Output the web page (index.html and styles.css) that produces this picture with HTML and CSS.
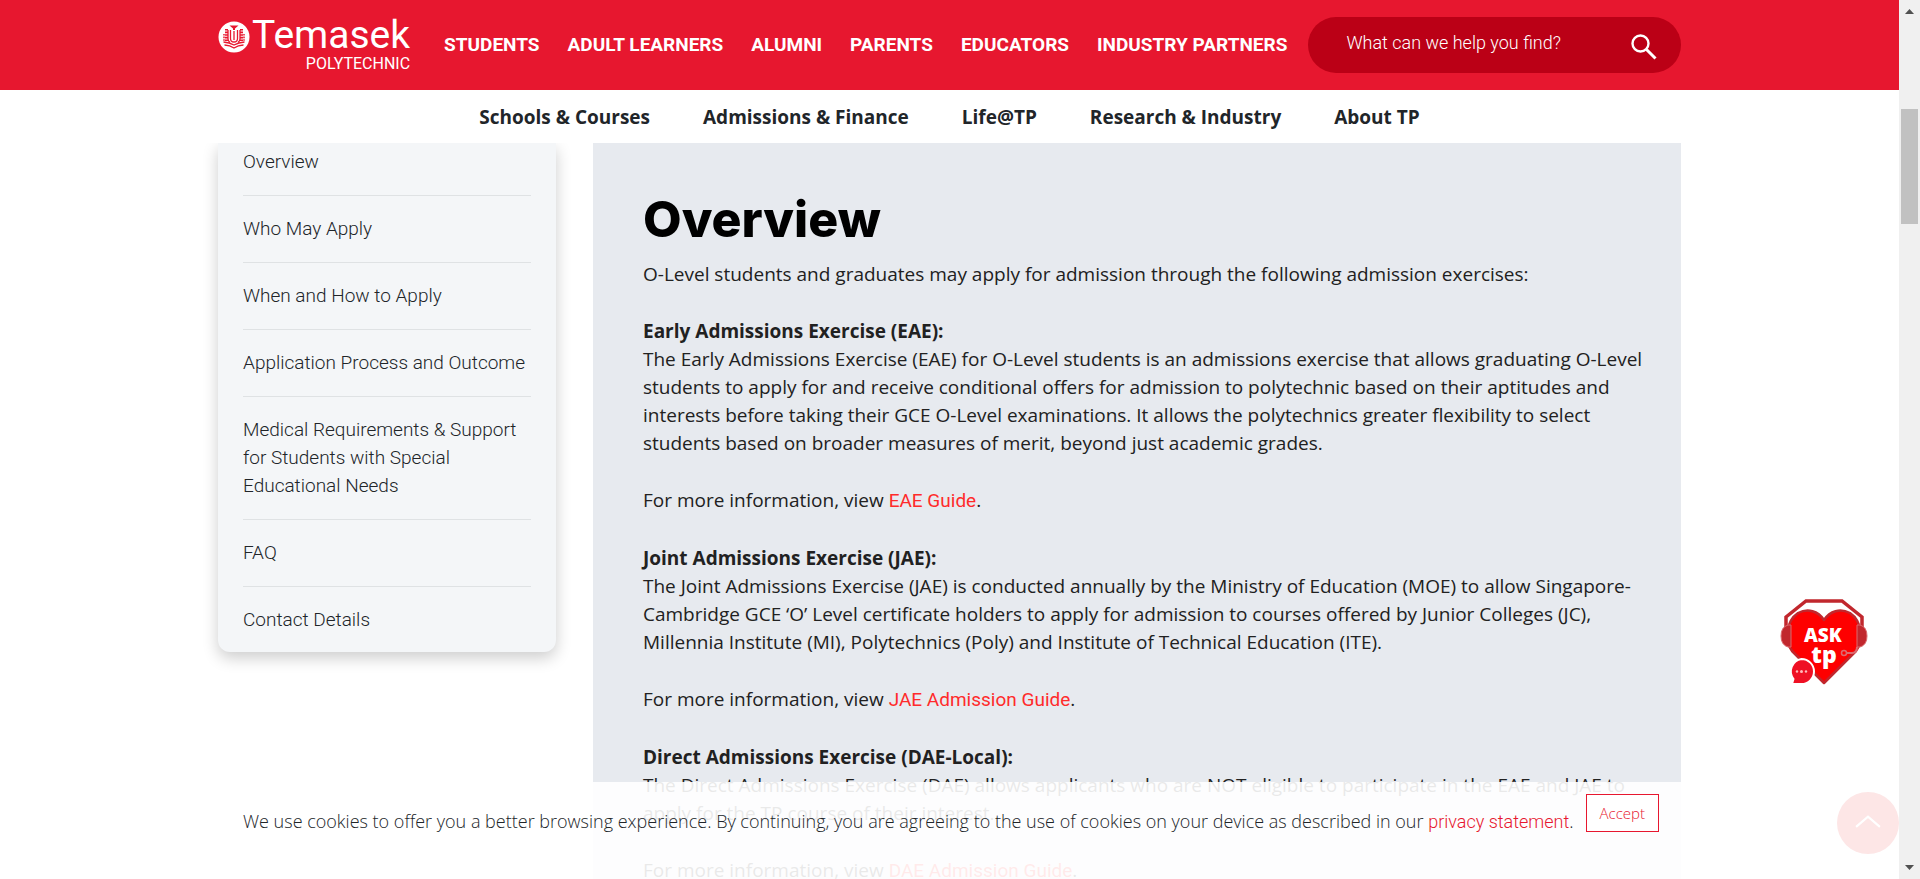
FILE: index.html
```html
<!DOCTYPE html>
<html lang="en">
<head>
<meta charset="utf-8">
<meta name="viewport" content="width=device-width, initial-scale=1">
<title>Temasek Polytechnic - Admissions</title>
<link rel="stylesheet" href="styles.css">
</head>
<body>
<div class="page">
  <header class="header">
    <div class="topbar">
      <div class="container topbar-row">
        <a class="logo" href="#" aria-label="Temasek Polytechnic">
          <svg class="logo-emblem" viewBox="0 0 32 32" aria-hidden="true">
            <circle cx="16" cy="16" r="15.5" fill="#fff"/>
            <path d="M11.5 4.5h9L17 7.5V9h-2V7.500z" fill="#e7172f"/>
            <g fill="none" stroke="#e7172f" stroke-width="1.300">
              <path d="M12.500 9v8.500q0 3.500 3.500 3.500t3.500-3.500V9"/>
              <path d="M10 9v9q0 2 2 3.500M22 9v9q0 2-2 3.500"/>
              <path d="M16 10v9"/>
              <path d="M5.500 21q6 .5 10.500 3 4.500-2.500 10.500-3M6.500 24q5.500.3 9.500 3 4-2.700 9.500-3"/>
            </g>
            <path d="M8.500 8v12M23.500 8v12" stroke="#e7172f" stroke-width="3" stroke-dasharray="1.600 1" fill="none"/>
            <path d="M6 13v7M26 13v7" stroke="#e7172f" stroke-width="1.500" stroke-dasharray="1.600 1" fill="none"/>
          </svg>
          <span class="logo-words"><span class="logo-name">Temasek</span><span class="logo-sub">POLYTECHNIC</span></span>
        </a>
        <nav class="audience" aria-label="Audience">
          <a href="#">STUDENTS</a><a href="#">ADULT LEARNERS</a><a href="#">ALUMNI</a><a href="#">PARENTS</a><a href="#">EDUCATORS</a><a href="#">INDUSTRY PARTNERS</a>
        </nav>
        <form class="search">
          <input class="search-input" type="text" placeholder="What can we help you find?" aria-label="Search">
          <button class="search-button" type="button" aria-label="Search">
            <svg viewBox="0 0 26 26" width="26" height="26" fill="none" stroke="#fff"><circle cx="9.500" cy="9.500" r="8" stroke-width="2.400"/><path d="M15.500 15.500l9 9" stroke-width="3"/></svg>
          </button>
        </form>
      </div>
    </div>
    <nav class="sections" aria-label="Main">
      <a href="#">Schools &amp; Courses</a><a href="#">Admissions &amp; Finance</a><a href="#">Life@TP</a><a href="#">Research &amp; Industry</a><a href="#">About TP</a>
    </nav>
  </header>

  <div class="scroll">
    <div class="container columns">
      <nav class="sidebar" aria-label="On this page">
        <a href="#">Overview</a>
        <a href="#">Who May Apply</a>
        <a href="#">When and How to Apply</a>
        <a href="#">Application Process and Outcome</a>
        <a href="#">Medical Requirements &amp; Support for Students with Special Educational Needs</a>
        <a href="#">FAQ</a>
        <a href="#">Contact Details</a>
      </nav>
      <main class="content">
        <h1>Overview</h1>
        <p>O-Level students and graduates may apply for admission through the following admission exercises:</p>
        <p><strong>Early Admissions Exercise (EAE):</strong><br>The Early Admissions Exercise (EAE) for O-Level students is an admissions exercise that allows graduating O-Level students to apply for and receive conditional offers for admission to polytechnic based on their aptitudes and interests before taking their GCE O-Level examinations. It allows the polytechnics greater flexibility to select students based on broader measures of merit, beyond just academic grades.</p>
        <p>For more information, view <a href="#">EAE Guide</a>.</p>
        <p><strong>Joint Admissions Exercise (JAE):</strong><br>The Joint Admissions Exercise (JAE) is conducted annually by the Ministry of Education (MOE) to allow Singapore-Cambridge GCE ‘O’ Level certificate holders to apply for admission to courses offered by Junior Colleges (JC), Millennia Institute (MI), Polytechnics (Poly) and Institute of Technical Education (ITE).</p>
        <p>For more information, view <a href="#">JAE Admission Guide</a>.</p>
        <p><strong>Direct Admissions Exercise (DAE-Local):</strong><br>The Direct Admissions Exercise (DAE) allows applicants who are NOT eligible to participate in the EAE and JAE to apply for the TP course of their interest.</p>
        <p>For more information, view <a href="#">DAE Admission Guide</a>.</p>
      </main>
    </div>
  </div>

  <button class="ask" type="button" aria-label="Ask TP">
    <svg viewBox="0 0 88 86" width="88" height="86">
      <path d="M44 84L12 52C4 42 6 22 18 14c10-5 20-2 26 7 6-9 16-12 26-7 12 8 14 28 6 38z" fill="#fe0000" stroke="#c1272d" stroke-width="2.500" stroke-linejoin="round"/>
      <path d="M6 30V18L26 2h36l20 16v12" fill="none" stroke="#c1272d" stroke-width="3.500"/>
      <path d="M11 26H8q-7 2-7 11t7 11h3zM77 26h3q7 2 7 11t-7 11h-3z" fill="#c1272d" stroke="#dc6a6e" stroke-width="1"/>
      <path d="M77 48q0 6-5 6h-6" fill="none" stroke="#dc6a6e" stroke-width="2"/>
      <circle cx="64" cy="54" r="2.500" fill="#fe0000" stroke="#dc6a6e" stroke-width="1.500"/>
      <path d="M21.500 60a12.500 12.500 0 1 1 0 25H12l1.500-5A12.500 12.500 0 0 1 21.500 60z" fill="#ef1024" stroke="#fff" stroke-width="2"/>
      <g fill="#fbb"><circle cx="17" cy="72.500" r="1.200"/><circle cx="21.500" cy="72.500" r="1.500"/><circle cx="26" cy="72.500" r="1.200"/></g>
      <text class="ask-text" x="43" y="43" font-size="19">ASK</text>
      <text class="ask-text" x="44" y="64" font-size="23">tp</text>
    </svg>
  </button>

  <button class="to-top" type="button" aria-label="Back to top">
    <svg viewBox="0 0 24 12" width="26" height="13" fill="none" stroke="#fff" stroke-width="2"><path d="M1 11L12 1.500 23 11"/></svg>
  </button>

  <div class="cookies" role="region" aria-label="Cookie notice">
    <div class="container cookies-row">
      <p>We use cookies to offer you a better browsing experience. By continuing, you are agreeing to the use of cookies on your device as described in our <a href="#">privacy statement</a>.</p>
      <button class="accept" type="button">Accept</button>
    </div>
  </div>
</div>

<div class="track" aria-hidden="true">
  <svg viewBox="0 0 9 5" width="9" height="5"><path d="M0 5L4.500 0 9 5z" fill="#505050"/></svg>
  <div class="thumb"></div>
  <svg class="track-end" viewBox="0 0 9 5" width="9" height="5"><path d="M0 0L4.500 5 9 0z" fill="#505050"/></svg>
</div>
</body>
</html>
```
FILE: styles.css
```css
* { box-sizing: border-box; }

body {
  margin: 0;
  display: flex;
  height: 100vh;
  overflow: hidden;
  background: #fff;
  color: #212529;
  font-family: "Open Sans", "Noto Sans", sans-serif;
  font-size: 19px;
  line-height: 28px;
}

a { text-decoration: none; color: inherit; }
button { font: inherit; cursor: pointer; }

.page {
  position: relative;
  flex: 1;
  min-width: 0;
  display: flex;
  flex-direction: column;
}

.container {
  width: 100%;
  max-width: 1463px;
  margin: 0 auto;
}

.header { position: relative; z-index: 2; background: #fff; }
.topbar { background: #e7172f; }
.topbar-row { display: flex; align-items: center; height: 90px; }

.logo { display: flex; gap: 2px; color: #fff; font-family: Roboto, sans-serif; font-weight: 400; }
.logo-emblem { width: 32px; height: 32px; margin-top: 5px; }
.logo-words { display: flex; flex-direction: column; align-items: flex-end; }
.logo-name { font-size: 39px; line-height: 38px; }
.logo-sub { font-size: 16px; line-height: 20px; }

.audience {
  display: flex;
  gap: 28px;
  margin-left: 34px;
  color: #fff;
  font-family: Roboto, sans-serif;
  font-weight: 700;
  white-space: nowrap;
}

.search {
  display: flex;
  align-items: center;
  flex: 1;
  height: 56px;
  margin-left: 21px;
  padding: 0 24px 0 38px;
  border-radius: 28px;
  background: #bb0016;
}
.search-input {
  flex: 1;
  min-width: 0;
  padding: 0 0 6px;
  border: 0;
  outline: 0;
  background: none;
  color: #fff;
  font-family: Roboto, sans-serif;
  font-size: 18px;
  font-weight: 300;
}
.search-input::placeholder { color: #fff; opacity: 1; }
.search-button { display: flex; padding: 4px 0 0; border: 0; background: none; }

.sections {
  display: flex;
  justify-content: center;
  align-items: center;
  gap: 53px;
  height: 53px;
  font-weight: 700;
}

.scroll { flex: 1; min-height: 0; overflow-y: auto; scrollbar-width: none; }
.columns { display: flex; align-items: flex-start; gap: 37px; }

.sidebar {
  flex: none;
  width: 338px;
  padding: 0 25px;
  border-radius: 0 0 12px 12px;
  background: #f4f6f8;
  box-shadow: 0 6px 16px rgba(0, 0, 0, 0.2);
  font-family: Roboto, sans-serif;
  font-weight: 300;
}
.sidebar a { display: block; padding: 19px 0; border-bottom: 1px solid #dfe2e4; }
.sidebar a:first-child { padding-top: 5px; }
.sidebar a:last-child { padding-bottom: 18px; border-bottom: 0; }

.content {
  flex: 1;
  min-width: 0;
  padding: 46px 36px 48px 50px;
  background: #e7eaef;
  color: #212121;
}
.content h1 {
  margin: 0 0 11px;
  color: #000;
  font-family: Inter, sans-serif;
  font-size: 50px;
  font-weight: 800;
  line-height: 60px;
}
.content p { margin: 0 0 29px; }
.content strong { font-weight: 700; }
.content a { color: #ff2b2b; font-family: Roboto, sans-serif; }

.cookies {
  position: absolute;
  z-index: 3;
  left: 0;
  right: 0;
  bottom: 0;
  height: 97px;
  padding-top: 12px;
  background: rgba(255, 255, 255, 0.9);
}
.cookies-row { display: flex; align-items: flex-start; gap: 12px; padding-left: 25px; }
.cookies p { margin: 13px 0 0; font-size: 18px; font-weight: 300; }
.cookies a { color: #e7172f; font-family: Roboto, sans-serif; }
.accept {
  height: 38px;
  padding: 0 13px;
  border: 1px solid #e7172f;
  background: #fff;
  color: #e7172f;
  font-size: 15px;
  font-weight: 300;
}

.ask {
  position: absolute;
  z-index: 3;
  right: 31px;
  bottom: 194px;
  display: flex;
  padding: 0;
  border: 0;
  background: none;
}
.ask-text {
  fill: #fff;
  font-family: "Open Sans", sans-serif;
  font-weight: 800;
  text-anchor: middle;
}

.to-top {
  position: absolute;
  z-index: 4;
  right: 0;
  bottom: 25px;
  display: flex;
  align-items: center;
  justify-content: center;
  width: 62px;
  height: 62px;
  padding: 0 0 4px;
  border: 0;
  border-radius: 50%;
  background: #fde6e6;
}

.track {
  flex: none;
  display: flex;
  flex-direction: column;
  align-items: center;
  width: 21px;
  padding: 9px 2px;
  background: #f0f0f0;
}
.thumb { width: 17px; height: 115px; margin-top: 95px; background: #c1c1c1; }
.track-end { margin-top: auto; }
```
